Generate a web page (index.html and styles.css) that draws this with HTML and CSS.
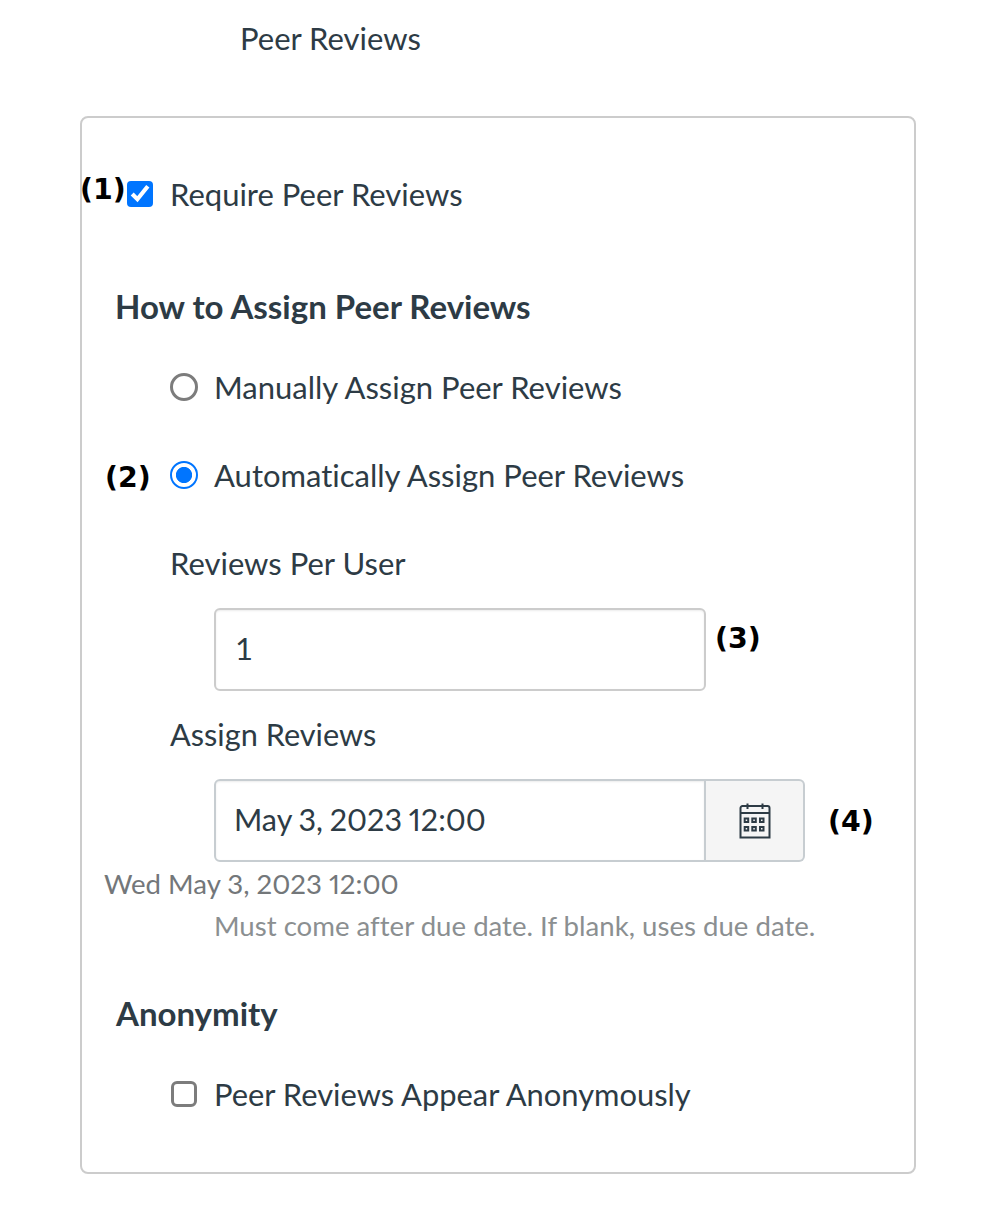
FILE: index.html
```html
<!DOCTYPE html>
<html lang="en">
<head>
  <meta charset="UTF-8">
  <title>Peer Reviews</title>
  <link rel="stylesheet" href="styles.css">
</head>
<body>

  <div class="section-title">Peer Reviews</div>

  <div class="panel">
    <label class="row require-row">
      <span class="badge badge-1">(1)</span>
      <input type="checkbox" class="check" checked>
      <span>Require Peer Reviews</span>
    </label>

    <h2 class="group-title">How to Assign Peer Reviews</h2>

    <label class="row radio-row manual-row">
      <input type="radio" class="radio" name="assign">
      <span>Manually Assign Peer Reviews</span>
    </label>

    <label class="row radio-row auto-row">
      <span class="badge badge-2">(2)</span>
      <input type="radio" class="radio" name="assign" checked>
      <span>Automatically Assign Peer Reviews</span>
    </label>

    <div class="field-label per-user">Reviews Per User</div>
    <div class="field-row first-field">
      <input type="text" class="text-input plain-input" value="1">
      <span class="badge badge-3">(3)</span>
    </div>

    <div class="field-label assign-label">Assign Reviews</div>
    <div class="field-row date-row">
      <div class="date-group">
        <input type="text" class="text-input date-input" value="May 3, 2023 12:00">
        <button type="button" class="date-btn" aria-label="Calendar">
          <svg width="32" height="36" viewBox="0 0 32 36" fill="none" stroke="#2d3b45" stroke-width="2">
            <path d="M1.500 34.500V5a2 2 0 0 1 2-2h25a2 2 0 0 1 2 2v29.500z"/>
            <path d="M1.500 10h29"/>
            <path d="M8.500 0.500v5.500M23.500 0.500v5.500"/>
            <rect x="5.700" y="15.500" width="3.500" height="3.500"/>
            <rect x="13.300" y="15.500" width="3.500" height="3.500"/>
            <rect x="21" y="15.500" width="3.500" height="3.500"/>
            <rect x="5.700" y="24" width="3.500" height="3.500"/>
            <rect x="13.300" y="24" width="3.500" height="3.500"/>
            <rect x="21" y="24" width="3.500" height="3.500"/>
          </svg>
        </button>
      </div>
      <span class="badge badge-4">(4)</span>
    </div>

    <div class="date-echo">Wed May 3, 2023 12:00</div>
    <div class="hint">Must come after due date. If blank, uses due date.</div>

    <h2 class="group-title anon-title">Anonymity</h2>

    <label class="row radio-row anon-row">
      <input type="checkbox" class="box plain">
      <span>Peer Reviews Appear Anonymously</span>
    </label>
  </div>

</body>
</html>
```

FILE: styles.css
```css
html, body {
  margin: 0;
  padding: 0;
  background: #fff;
  font-family: 'Lato', sans-serif;
  font-variant-ligatures: none;
  font-variant-numeric: proportional-nums;
  color: #2d3b45;
  font-size: 31px;
  line-height: 40px;
}

.section-title {
  padding: 18px 0 0 240px;
}

.panel {
  box-sizing: border-box;
  width: 836px;
  height: 1058px;
  margin: 58px 0 0 80px;
  border: 2px solid #ccc;
  border-radius: 8px;
}

.row {
  position: relative;
  display: flex;
  align-items: center;
}

.require-row {
  margin-top: 56px;
  padding-left: 45px;
  gap: 17px;
}

.radio-row {
  padding-left: 88px;
  gap: 16px;
}

.manual-row {
  margin-top: 41px;
}

.auto-row {
  margin-top: 48px;
}

.anon-row {
  margin-top: 42px;
  font-size: 30.900px;
}

.check {
  margin: 0;
  zoom: 2;
  accent-color: #0075ff;
}

/* drawn by hand: the native ones come out too thin at this size */
.box {
  appearance: none;
  box-sizing: border-box;
  width: 26px;
  height: 26px;
  margin: -2px 0 0;
  border: 3px solid #7c7c7c;
  border-radius: 6px;
  background: #fff;
}

.radio {
  appearance: none;
  box-sizing: border-box;
  width: 28px;
  height: 28px;
  margin: 0;
  border: 3px solid #7c7c7c;
  border-radius: 50%;
  background: #fff;
}

.radio:checked {
  border-color: #0075ff;
  border-width: 2.500px;
  background: radial-gradient(circle, #0075ff 0 7.700px, #fff 8.500px);
}

.plain {
  margin-left: 1px;
}

.plain + span {
  margin-left: 1px;
}

.group-title {
  margin: 72px 0 0 33px;
  font-size: 33px;
  line-height: 40px;
  font-weight: 700;
}

.anon-title {
  margin: 47px 0 0 34px;
  font-size: 33px;
}

.badge {
  font-family: 'DejaVu Sans', sans-serif;
  font-weight: 700;
  font-size: 28.400px;
  line-height: 32px;
  color: #000;
}

.badge-1 {
  position: absolute;
  left: -2px;
  top: 0;
}

.badge-2 {
  position: absolute;
  left: 23px;
  top: 7px;
}

.badge-3 {
  margin: -22px 0 0 9px;
}

.badge-4 {
  margin: 2px 0 0 23px;
}

.field-label {
  padding-left: 88px;
}

.per-user {
  margin-top: 48px;
}

.assign-label {
  margin-top: 24px;
  font-size: 30.700px;
}

.field-row {
  display: flex;
  align-items: center;
  margin: 25px 0 0 132px;
}

.date-row {
  margin-top: 24px;
}

.text-input {
  box-sizing: border-box;
  width: 492px;
  height: 83px;
  padding: 0 18px 4px;
  border: 2px solid #c7cdd1;
  border-radius: 6px;
  background: #fff;
  box-shadow: inset 0 1px 2px rgba(0, 0, 0, 0.08);
  font-family: inherit;
  font-size: inherit;
  font-variant: inherit;
  color: inherit;
  outline: none;
}

.plain-input {
  padding-left: 19px;
  border-color: #ccc;
  font-variant-numeric: normal;
}

.date-group {
  display: flex;
}

.date-input {
  border-radius: 6px 0 0 6px;
  font-size: 30.500px;
  word-spacing: -1px;
}

.date-btn {
  box-sizing: border-box;
  width: 99px;
  height: 83px;
  padding: 0;
  border: 2px solid #c7cdd1;
  border-left: 0;
  border-radius: 0 6px 6px 0;
  background: #f5f5f5;
  display: flex;
  align-items: center;
  justify-content: center;
}

.date-echo {
  margin: 2px 0 0 22px;
  font-size: 27.600px;
  color: #73777a;
}

.hint {
  margin: 2px 0 0 132px;
  font-size: 27.600px;
  color: #8b8f91;
}
```
